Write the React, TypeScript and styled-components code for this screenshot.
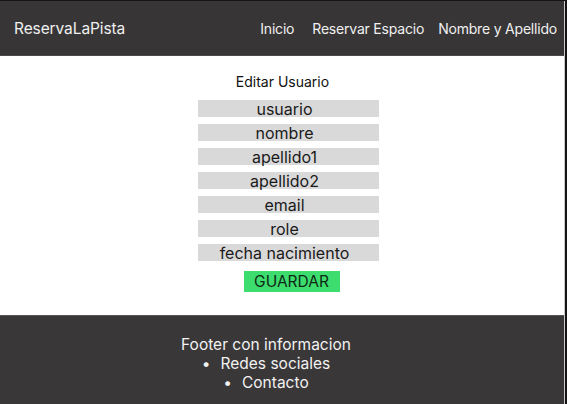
import React from 'react';
import styled, { createGlobalStyle } from 'styled-components';

const GlobalStyle = createGlobalStyle`
  html, body {
    margin: 0;
    padding: 0;
    background: #141414;
  }
  body {
    font-family: Inter, "Noto Sans", sans-serif;
  }
`;

const Page = styled.div`
  width: 564px;
  height: 403px;
  margin-top: 1px;
  display: flex;
  flex-direction: column;
  background: #ffffff;
  border-right: 1px solid #c8c8c8;
`;

const Header = styled.header`
  height: 54px;
  display: flex;
  align-items: center;
  justify-content: space-between;
  padding: 0 7px 0 14px;
  background: #373536;
  color: #f0f0f0;
  border-bottom: 1px solid #4a4a4a;
`;

const Brand = styled.div`
  font-size: 15.5px;
  letter-spacing: -0.1px;
`;

const Nav = styled.nav`
  display: flex;
  font-size: 14px;
  letter-spacing: -0.2px;
`;

const NavLink = styled.a<{ $gap?: number }>`
  color: inherit;
  text-decoration: none;
  margin-left: ${(p) => p.$gap ?? 0}px;
`;

const Main = styled.main`
  flex: 1;
  display: flex;
  flex-direction: column;
  align-items: center;
  padding-top: 17px;
`;

const Title = styled.h2`
  margin: 0 0 10px 0;
  padding-left: 1px;
  font-size: 14px;
  font-weight: 400;
  color: #111;
`;

const Fields = styled.div`
  display: flex;
  flex-direction: column;
  gap: 7px;
`;

const Field = styled.div`
  width: 181px;
  height: 17px;
  box-sizing: border-box;
  padding-right: 8px;
  background: #d9d9d9;
  display: flex;
  align-items: center;
  justify-content: center;
  font-size: 16px;
  color: #1a1a1a;
  margin-left: 13px;
`;

const SaveButton = styled.button`
  margin: 10px 0 0 19px;
  width: 96px;
  height: 21px;
  border: none;
  padding: 0;
  background: #3ddc6e;
  color: #0d2a14;
  font-family: inherit;
  font-size: 15.5px;
  cursor: pointer;
`;

const Footer = styled.footer`
  height: 89px;
  background: #3a3738;
  color: #f2f2f2;
  display: flex;
  flex-direction: column;
  align-items: center;
  padding: 19px 32px 0 0;
  box-sizing: border-box;
  border-top: 1px solid #555;
  font-size: 15.5px;
  line-height: 19px;
`;

const FooterList = styled.ul`
  margin: 0;
  padding: 0;
  list-style: none;
  text-align: center;
`;

const FooterItem = styled.li`
  &::before {
    content: '•';
    margin-right: 10px;
  }
`;

const fields = ['usuario', 'nombre', 'apellido1', 'apellido2', 'email', 'role', 'fecha nacimiento'];

export default function App() {
  return (
    <>
      <GlobalStyle />
      <Page>
        <Header>
          <Brand>ReservaLaPista</Brand>
          <Nav>
            <NavLink href="#">Inicio</NavLink>
            <NavLink href="#" $gap={18}>Reservar Espacio</NavLink>
            <NavLink href="#" $gap={14}>Nombre y Apellido</NavLink>
          </Nav>
        </Header>
        <Main>
          <Title>Editar Usuario</Title>
          <Fields>
            {fields.map((f) => (
              <Field key={f}>{f}</Field>
            ))}
          </Fields>
          <SaveButton>GUARDAR</SaveButton>
        </Main>
        <Footer>
          <div>Footer con informacion</div>
          <FooterList>
            <FooterItem>Redes sociales</FooterItem>
            <FooterItem>Contacto</FooterItem>
          </FooterList>
        </Footer>
      </Page>
    </>
  );
}
